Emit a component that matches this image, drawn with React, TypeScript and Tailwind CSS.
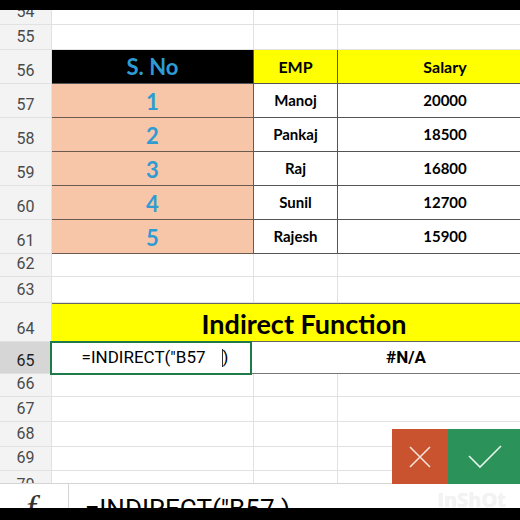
import React from 'react';

const grid = 'border-[#e1e1e1]';

function Header({ n, h, active = false }: { n: number; h: string; active?: boolean }) {
  return (
    <div
      className={`w-[52px] shrink-0 ${h} flex items-end justify-center pb-[2px] border-r border-b ${grid} ${
        active ? 'bg-[#d6d6d6] text-[#222]' : 'bg-[#f3f3f3] text-[#4a4a4a]'
      } text-[16px] leading-none overflow-hidden`}
      style={{ fontFamily: 'Roboto, "Liberation Sans", sans-serif' }}
    >
      <span className="pb-[2px]">{n}</span>
    </div>
  );
}

function EmptyRow({ n, h }: { n: number; h: string }) {
  return (
    <div className={`flex ${h}`}>
      <Header n={n} h={h} />
      <div className={`w-[202px] shrink-0 border-r border-b ${grid}`} />
      <div className={`w-[84px] shrink-0 border-r border-b ${grid}`} />
      <div className={`flex-1 border-b ${grid}`} />
    </div>
  );
}

const data = [
  { n: 57, s: 1, emp: 'Manoj', sal: 20000 },
  { n: 58, s: 2, emp: 'Pankaj', sal: 18500 },
  { n: 59, s: 3, emp: 'Raj', sal: 16800 },
  { n: 60, s: 4, emp: 'Sunil', sal: 12700 },
  { n: 61, s: 5, emp: 'Rajesh', sal: 15900 },
];

const bold = { fontFamily: 'Lato, "Open Sans", "Liberation Sans", sans-serif' };

export default function App() {
  return (
    <div className="relative w-[520px] h-[520px] overflow-hidden bg-white">
      <div className="h-[10px] bg-black" />

      <EmptyRow n={54} h="h-[15px]" />
      <EmptyRow n={55} h="h-[25px]" />

      {/* table header */}
      <div className="flex h-[34px]">
        <Header n={56} h="h-[34px]" />
        <div
          className="w-[202px] shrink-0 bg-black border-r border-b border-[#555] flex items-center justify-center text-[#2f9bd3] text-[22px] font-bold"
          style={bold}
        >
          S. No
        </div>
        <div
          className="w-[84px] shrink-0 bg-[#ffff00] border-r border-b border-[#555] flex items-center justify-center text-black text-[16px] font-bold"
          style={bold}
        >
          EMP
        </div>
        <div
          className="flex-1 bg-[#ffff00] border-b border-[#555] flex items-center justify-center text-black text-[16px] font-bold pl-[32px]"
          style={bold}
        >
          Salary
        </div>
      </div>

      {data.map((r) => (
        <div key={r.n} className="flex h-[34px]">
          <Header n={r.n} h="h-[34px]" />
          <div
            className="w-[202px] shrink-0 bg-[#f7c6a9] border-r border-b border-[#6b5a50] flex items-center justify-center pt-[2px] text-[#2f9bd3] text-[22px] font-bold"
            style={bold}
          >
            {r.s}
          </div>
          <div
            className="w-[84px] shrink-0 border-r border-b border-[#555] flex items-center justify-center text-black text-[15px] font-bold"
            style={bold}
          >
            {r.emp}
          </div>
          <div
            className="flex-1 border-b border-[#555] flex items-center justify-center text-black text-[15px] font-bold pl-[32px]"
            style={bold}
          >
            {r.sal}
          </div>
        </div>
      ))}

      <EmptyRow n={62} h="h-[23px]" />
      <EmptyRow n={63} h="h-[26px]" />

      {/* title row */}
      <div className="flex h-[39px]">
        <Header n={64} h="h-[39px]" />
        <div
          className="flex-1 bg-[#ffff00] border-t border-b border-[#666] flex items-center justify-center pt-[3px] pl-[36px] text-black text-[27px] font-bold"
          style={bold}
        >
          Indirect Function
        </div>
      </div>

      {/* editing row */}
      <div className="flex h-[32px]">
        <Header n={65} h="h-[32px]" active />
        <div
          className="relative w-[202px] shrink-0 border-2 border-[#1f7a4a] -ml-[2px] -mt-[1px] h-[34px] flex items-center justify-center text-black text-[17px] z-10 bg-white"
          style={{ fontFamily: 'Roboto, "Liberation Sans", sans-serif' }}
        >
          <span className="pl-[8px]">=INDIRECT("B57</span>
          <span className="ml-[16px] w-[1px] h-[18px] bg-[#333]" />
          <span>)</span>
        </div>
        <div
          className="flex-1 border-b border-[#777] flex items-center justify-center pl-[40px] text-black text-[17px] font-bold"
          style={{ fontFamily: 'Roboto, "Liberation Sans", sans-serif' }}
        >
          #N/A
        </div>
      </div>

      <EmptyRow n={66} h="h-[23px]" />
      <EmptyRow n={67} h="h-[25px]" />
      <EmptyRow n={68} h="h-[25px]" />
      <EmptyRow n={69} h="h-[24px]" />
      <div className="flex h-[12px] overflow-hidden">
        <div
          className={`w-[52px] shrink-0 bg-[#f3f3f3] border-r ${grid} flex justify-center text-[16px] leading-none text-[#4a4a4a] pt-[6px]`}
          style={{ fontFamily: 'Roboto, "Liberation Sans", sans-serif' }}
        >
          70
        </div>
        <div className={`w-[202px] shrink-0 border-r ${grid}`} />
        <div className={`w-[84px] shrink-0 border-r ${grid}`} />
        <div className="flex-1" />
      </div>

      {/* formula bar */}
      <div className="relative flex h-[25px] border-t border-[#d4d4d4] bg-white overflow-hidden">
        <div className="w-[69px] shrink-0 border-r border-[#d4d4d4] flex justify-center">
          <span
            className="italic text-[36px] leading-none text-[#333] pt-[6px] -ml-[6px]"
            style={{ fontFamily: '"Liberation Serif", "DejaVu Serif", serif' }}
          >
            f
          </span>
        </div>
        <div
          className="pl-[16px] pt-[12px] text-[26px] leading-none text-black whitespace-nowrap"
          style={{ fontFamily: 'Roboto, "Liberation Sans", sans-serif' }}
        >
          =INDIRECT("B57 )
        </div>
        <div
          className="absolute right-[14px] top-[6px] text-[20px] leading-none font-bold text-[#f3f3f3]"
          style={{ fontFamily: '"Open Sans", sans-serif', textShadow: '0 0 1px #e9e9e9' }}
        >
          InShOt
        </div>
      </div>
      <div className="h-[12px] bg-black" />

      {/* cancel / confirm buttons */}
      <div className="absolute left-[392px] top-[429px] flex h-[55px]">
        <div className="w-[56px] bg-[#c8532e] flex items-center justify-center">
          <svg width="24" height="24" viewBox="0 0 24 24" fill="none" stroke="#f6e3da" strokeWidth="1.6">
            <path d="M2 2 L22 22 M22 2 L2 22" />
          </svg>
        </div>
        <div className="w-[72px] bg-[#2b935a] flex items-center justify-center pl-[2px]">
          <svg width="34" height="24" viewBox="0 0 34 24" fill="none" stroke="#e6f5ea" strokeWidth="1.6">
            <path d="M1 11 L12 22 L33 1" />
          </svg>
        </div>
      </div>
    </div>
  );
}
